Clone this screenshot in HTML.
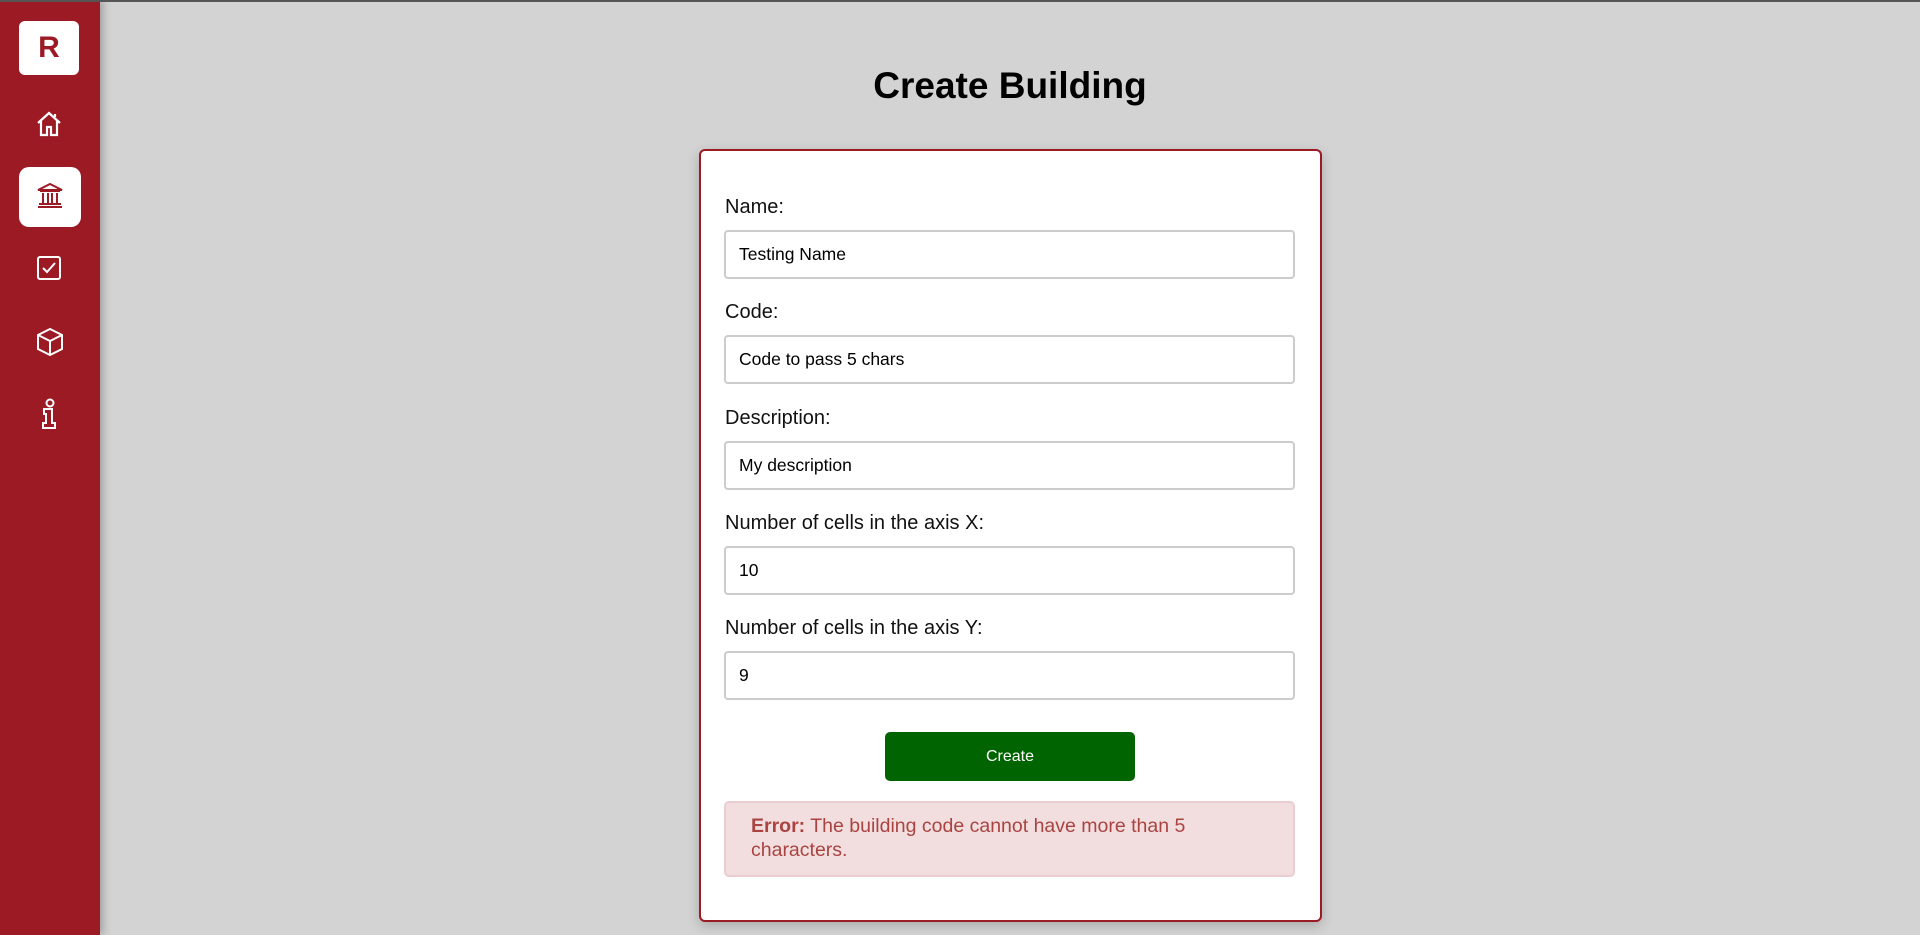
<!DOCTYPE html>
<html><head><meta charset="utf-8"><style>
*{box-sizing:border-box;margin:0;padding:0}
html,body{width:1920px;height:935px;overflow:hidden}
body{background:#d3d3d3;font-family:"Liberation Sans",Roboto,sans-serif;position:relative}
.topl{position:absolute;left:0;top:0;width:1920px;height:2px;background:#555;z-index:5}
.side{position:absolute;left:0;top:0;width:100px;height:935px;background:#9b1a24;box-shadow:3px 0 8px rgba(0,0,0,.25)}
.logo{position:absolute;left:19px;top:21px;width:60px;height:54px;background:#fff;border-radius:6px;color:#9b1a24;font-weight:bold;font-size:30px;text-align:center;line-height:54px}
.act{position:absolute;left:19px;top:167px;width:62px;height:60px;background:#fff;border-radius:10px}
.ic{position:absolute;left:35px}
h1{position:absolute;left:100px;right:0;top:65px;text-align:center;font-size:37px;font-weight:bold;color:#000}
.card{position:absolute;left:699px;top:149px;width:623px;height:773px;background:#fff;border:2px solid #9b1a24;border-radius:6px;box-shadow:0 4px 12px rgba(0,0,0,.2)}
.lab{position:absolute;left:24px;font-size:20px;color:#111}
.inp{position:absolute;left:23px;width:571px;height:49px;border:2px solid #ccc;border-radius:4px;font-size:17.5px;line-height:45px;padding-left:13px;color:#000}
.btn{position:absolute;left:184px;top:581px;width:250px;height:49px;background:#006400;color:#fff;border-radius:5px;text-align:center;line-height:49px;font-size:16px}
.err{position:absolute;left:23px;top:650px;width:571px;height:76px;background:#f2dede;border:2px solid #ebccd1;border-radius:5px;color:#a94442;font-size:19.5px;line-height:24px;padding:11px 0 0 25px}
</style></head><body>
<div class="topl"></div>
<div class="side">
<div class="logo">R</div>
<svg class="ic" style="top:110px" width="28" height="28" viewBox="0 0 28 28" fill="none" stroke="#fff" stroke-width="2.2"><path d="M3 13 L14 3 L25 13 M6 11 V25 H12 V17 H16 V25 H22 V11 M20 7 V4"/></svg>
<div class="act"></div>
<svg class="ic" style="top:181px" width="30" height="28" viewBox="0 0 30 28" fill="none" stroke="#9b1a24" stroke-width="2"><path d="M3 9 L15 3 L27 9 Z M5 10 H25 M8 12 V22 M13 12 V22 M17 12 V22 M22 12 V22 M4 23 H26 M3 26 H27"/></svg>
<svg class="ic" style="top:254px" width="28" height="28" viewBox="0 0 28 28" fill="none" stroke="#fff" stroke-width="2"><rect x="3" y="3" width="22" height="22" rx="2"/><path d="M8 14 L12 18 L20 9"/></svg>
<svg class="ic" style="top:327px" width="30" height="30" viewBox="0 0 30 30" fill="none" stroke="#fff" stroke-width="2"><path d="M15 2 L27 8 V22 L15 28 L3 22 V8 Z M3 8 L15 14 L27 8 M15 14 V28"/></svg>
<svg class="ic" style="top:398px" width="28" height="32" viewBox="0 0 28 32" fill="none" stroke="#fff" stroke-width="2"><circle cx="15" cy="5" r="3.5"/><path d="M9 11 H17 V25 H20 V30 H8 V25 H11 V16 H9 Z"/></svg>
</div>
<h1>Create Building</h1>
<div class="card">
<div class="lab" style="top:45px">Name:</div>
<div class="inp" style="top:79px">Testing Name</div>
<div class="lab" style="top:150px">Code:</div>
<div class="inp" style="top:184px">Code to pass 5 chars</div>
<div class="lab" style="top:256px">Description:</div>
<div class="inp" style="top:290px">My description</div>
<div class="lab" style="top:361px">Number of cells in the axis X:</div>
<div class="inp" style="top:395px">10</div>
<div class="lab" style="top:466px">Number of cells in the axis Y:</div>
<div class="inp" style="top:500px">9</div>
<div class="btn">Create</div>
<div class="err"><b>Error:</b> The building code cannot have more than 5<br>characters.</div>
</div>
</body></html>
